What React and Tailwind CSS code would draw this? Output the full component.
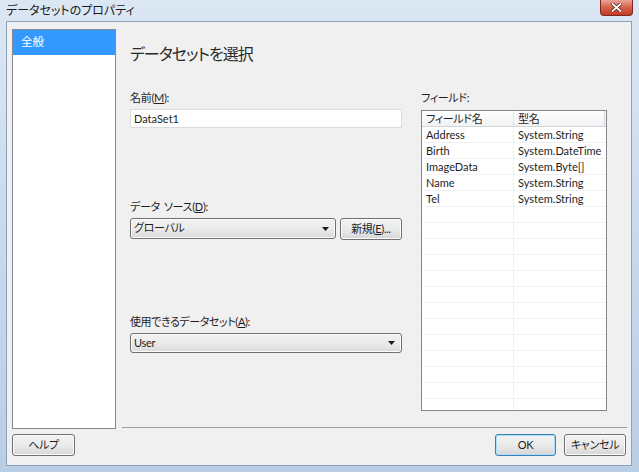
import React from 'react'

const fields = [
    ['Address', 'System.String'],
    ['Birth', 'System.DateTime'],
    ['ImageData', 'System.Byte[]'],
    ['Name', 'System.String'],
    ['Tel', 'System.String'],
]

function Arrow() {
    return (
        <svg width="7" height="4" viewBox="0 0 7 4" className="shrink-0">
            <path d="M0 0h7L3.5 4z" fill="#1a1a1a" />
        </svg>
    )
}

function Button({ children, focused, className }) {
    return (
        <div
            className={
                'h-[22px] rounded-[3px] border flex items-center justify-center text-[11px] tracking-[-0.3px] text-[#1e1e1e] bg-gradient-to-b from-[#f2f2f2] via-[#ebebeb] to-[#d6d6d6] ' +
                (focused ? 'border-[#3c7fb1] shadow-[inset_0_0_0_1px_#a8e0f9] ' : 'border-[#707070] shadow-[inset_0_0_0_1px_#fcfcfc] ') +
                className
            }
        >
            {children}
        </div>
    )
}

function Combo({ text, className }) {
    return (
        <div className={'flex items-center justify-between rounded-[3px] border border-[#707070] bg-gradient-to-b from-[#f2f2f2] via-[#ebebeb] to-[#d9d9d9] shadow-[inset_0_0_0_1px_#fcfcfc] pl-[3px] pr-[6px] text-[11px] tracking-[-0.3px] text-[#1e1e1e] ' + className}>
            <span>{text}</span>
            <Arrow />
        </div>
    )
}

export default function App() {
    const emptyRows = Array.from({ length: 14 })
    return (
        <div className="w-[639px] h-[472px] overflow-hidden bg-gradient-to-b from-[#dce7f4] via-[#c9daee] to-[#b9cde4] font-['Lato','Noto_Sans_CJK_JP',sans-serif] [font-feature-settings:'palt'] text-[#1e1e1e]">
            {/* title bar */}
            <div className="h-[21px] flex items-start justify-between pl-[6px] pr-[6px]">
                <div className="pt-[3px] text-[12px] leading-[16px] text-[#1b1b1b]">データセットのプロパティ</div>
                <div className="w-[33px] h-[16px] rounded-b-[4px] border border-t-0 border-[#7a2a22] bg-gradient-to-b from-[#eaa497] via-[#d5604a] to-[#c23a24] flex items-center justify-center">
                    <svg width="11" height="9" viewBox="0 0 11 9">
                        <path d="M1.5 1l8 7M9.5 1l-8 7" stroke="#4a1a14" strokeWidth="3.2" strokeLinecap="square" />
                        <path d="M1.5 1l8 7M9.5 1l-8 7" stroke="#ffffff" strokeWidth="1.8" strokeLinecap="square" />
                    </svg>
                </div>
            </div>

            {/* client */}
            <div className="ml-[6px] mr-[7px] h-[445px] border border-[#8ea3bb] bg-[#f0f0f0] flex flex-col">
                <div className="flex flex-row pt-[7px] pl-[5px]">
                    <div className="w-[104px] h-[400px] border border-[#828790] bg-white">
                        <div className="h-[25px] bg-[#3399ff] text-white text-[11.5px] pl-[8px] pt-[4px] leading-[16px]">全般</div>
                    </div>
                    <div className="ml-[6px] w-[505px] h-[399px] border-b border-[#a0a0a0] flex flex-row pl-[8px]">
                        <div className="w-[272px] flex flex-col">
                            <div className="mt-[14px] text-[16px] leading-[22px] tracking-[-1px] text-[#2a2a2a]">データセットを選択</div>
                            <div className="mt-[25px] text-[11px] leading-[16px] tracking-[-0.3px]">名前(<span className="underline">M</span>):</div>
                            <div className="mt-[3px] h-[19px] border border-[#dcdcdc] bg-white text-[11px] leading-[17px] pl-[3px]">DataSet1</div>
                            <div className="mt-[71px] text-[11px] leading-[16px] tracking-[-0.3px]">データ<span className="inline-block w-[4px]" />ソース(<span className="underline">D</span>):</div>
                            <div className="mt-[3px] flex flex-row items-start">
                                <Combo text="グローバル" className="w-[206px] h-[21px]" />
                                <Button className="ml-[4px] w-[62px]">新規(<span className="underline">E</span>)...</Button>
                            </div>
                            <div className="mt-[74px] text-[11px] leading-[16px] tracking-[-0.4px]">使用できるデータセット(<span className="underline">A</span>):</div>
                            <Combo text="User" className="mt-[3px] w-[272px] h-[20px]" />
                        </div>
                        <div className="ml-[19px] w-[186px] flex flex-col">
                            <div className="mt-[61px] text-[11px] leading-[16px] tracking-[-0.3px]">フィールド:</div>
                            <div className="mt-[4px] h-[301px] border border-[#828790] bg-white overflow-hidden">
                                <div className="flex flex-row h-[16px] border-b border-[#d5d5d5] bg-gradient-to-b from-white to-[#f1f2f4] text-[11px] leading-[15px] tracking-[-0.3px]">
                                    <div className="w-[92px] shrink-0 border-r border-[#e3e4e6] pl-[4px]">フィールド名</div>
                                    <div className="w-[91px] shrink-0 border-r border-[#d5d5d5] pl-[4px]">型名</div>
                                </div>
                                {fields.map(([n, t]) => (
                                    <div key={n} className="flex flex-row h-[16px] border-b border-[#f0f0f0] text-[11px] leading-[15px]">
                                        <div className="w-[92px] shrink-0 border-r border-[#f0f0f0] pl-[4px]">{n}</div>
                                        <div className="pl-[4px] whitespace-nowrap">{t}</div>
                                    </div>
                                ))}
                                {emptyRows.map((_, i) => (
                                    <div key={i} className="flex flex-row h-[16px] border-b border-[#f0f0f0]">
                                        <div className="w-[92px] shrink-0 border-r border-[#f0f0f0]" />
                                    </div>
                                ))}
                            </div>
                        </div>
                    </div>
                </div>
                <div className="flex flex-row items-start mt-[5px] pl-[5px] pr-[5px]">
                    <Button className="w-[63px]">ヘルプ</Button>
                    <div className="flex-1" />
                    <Button focused className="w-[61px]">OK</Button>
                    <Button className="ml-[8px] w-[62px]">キャンセル</Button>
                </div>
            </div>
        </div>
    )
}
